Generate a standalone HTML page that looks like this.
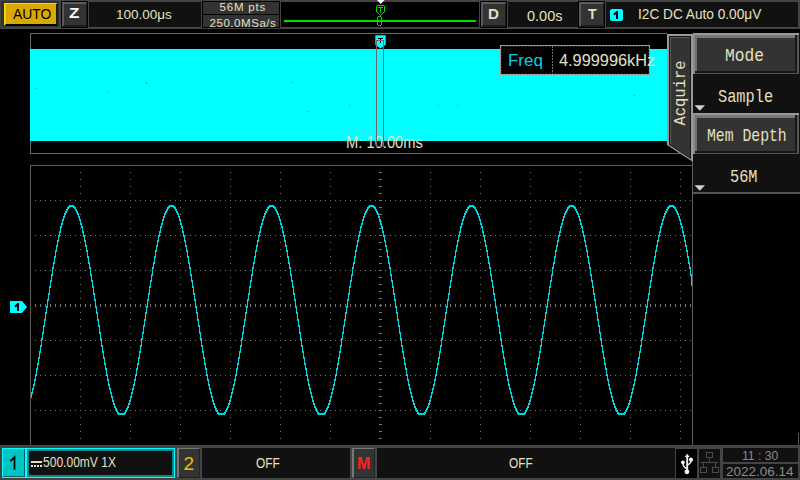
<!DOCTYPE html>
<html><head><meta charset="utf-8"><style>
html,body{margin:0;padding:0;background:#000;width:800px;height:480px;overflow:hidden;position:relative}
</style></head><body>
<svg width="800" height="480" viewBox="0 0 800 480" style="position:absolute;left:0;top:0" shape-rendering="crispEdges"><path fill="#767676" d="M35 200h1v1h-1zM40 200h1v1h-1zM45 200h1v1h-1zM50 200h1v1h-1zM55 200h1v1h-1zM60 200h1v1h-1zM65 200h1v1h-1zM70 200h1v1h-1zM75 200h1v1h-1zM80 200h1v1h-1zM85 200h1v1h-1zM90 200h1v1h-1zM95 200h1v1h-1zM100 200h1v1h-1zM105 200h1v1h-1zM110 200h1v1h-1zM115 200h1v1h-1zM120 200h1v1h-1zM125 200h1v1h-1zM130 200h1v1h-1zM135 200h1v1h-1zM140 200h1v1h-1zM145 200h1v1h-1zM150 200h1v1h-1zM155 200h1v1h-1zM160 200h1v1h-1zM165 200h1v1h-1zM170 200h1v1h-1zM175 200h1v1h-1zM180 200h1v1h-1zM185 200h1v1h-1zM190 200h1v1h-1zM195 200h1v1h-1zM200 200h1v1h-1zM205 200h1v1h-1zM210 200h1v1h-1zM215 200h1v1h-1zM220 200h1v1h-1zM225 200h1v1h-1zM230 200h1v1h-1zM235 200h1v1h-1zM240 200h1v1h-1zM245 200h1v1h-1zM250 200h1v1h-1zM255 200h1v1h-1zM260 200h1v1h-1zM265 200h1v1h-1zM270 200h1v1h-1zM275 200h1v1h-1zM280 200h1v1h-1zM285 200h1v1h-1zM290 200h1v1h-1zM295 200h1v1h-1zM300 200h1v1h-1zM305 200h1v1h-1zM310 200h1v1h-1zM315 200h1v1h-1zM320 200h1v1h-1zM325 200h1v1h-1zM330 200h1v1h-1zM335 200h1v1h-1zM340 200h1v1h-1zM345 200h1v1h-1zM350 200h1v1h-1zM355 200h1v1h-1zM360 200h1v1h-1zM365 200h1v1h-1zM370 200h1v1h-1zM375 200h1v1h-1zM380 200h1v1h-1zM385 200h1v1h-1zM390 200h1v1h-1zM395 200h1v1h-1zM400 200h1v1h-1zM405 200h1v1h-1zM410 200h1v1h-1zM415 200h1v1h-1zM420 200h1v1h-1zM425 200h1v1h-1zM430 200h1v1h-1zM435 200h1v1h-1zM440 200h1v1h-1zM445 200h1v1h-1zM450 200h1v1h-1zM455 200h1v1h-1zM460 200h1v1h-1zM465 200h1v1h-1zM470 200h1v1h-1zM475 200h1v1h-1zM480 200h1v1h-1zM485 200h1v1h-1zM490 200h1v1h-1zM495 200h1v1h-1zM500 200h1v1h-1zM505 200h1v1h-1zM510 200h1v1h-1zM515 200h1v1h-1zM520 200h1v1h-1zM525 200h1v1h-1zM530 200h1v1h-1zM535 200h1v1h-1zM540 200h1v1h-1zM545 200h1v1h-1zM550 200h1v1h-1zM555 200h1v1h-1zM560 200h1v1h-1zM565 200h1v1h-1zM570 200h1v1h-1zM575 200h1v1h-1zM580 200h1v1h-1zM585 200h1v1h-1zM590 200h1v1h-1zM595 200h1v1h-1zM600 200h1v1h-1zM605 200h1v1h-1zM610 200h1v1h-1zM615 200h1v1h-1zM620 200h1v1h-1zM625 200h1v1h-1zM630 200h1v1h-1zM635 200h1v1h-1zM640 200h1v1h-1zM645 200h1v1h-1zM650 200h1v1h-1zM655 200h1v1h-1zM660 200h1v1h-1zM665 200h1v1h-1zM670 200h1v1h-1zM675 200h1v1h-1zM680 200h1v1h-1zM685 200h1v1h-1zM690 200h1v1h-1zM35 235h1v1h-1zM40 235h1v1h-1zM45 235h1v1h-1zM50 235h1v1h-1zM55 235h1v1h-1zM60 235h1v1h-1zM65 235h1v1h-1zM70 235h1v1h-1zM75 235h1v1h-1zM80 235h1v1h-1zM85 235h1v1h-1zM90 235h1v1h-1zM95 235h1v1h-1zM100 235h1v1h-1zM105 235h1v1h-1zM110 235h1v1h-1zM115 235h1v1h-1zM120 235h1v1h-1zM125 235h1v1h-1zM130 235h1v1h-1zM135 235h1v1h-1zM140 235h1v1h-1zM145 235h1v1h-1zM150 235h1v1h-1zM155 235h1v1h-1zM160 235h1v1h-1zM165 235h1v1h-1zM170 235h1v1h-1zM175 235h1v1h-1zM180 235h1v1h-1zM185 235h1v1h-1zM190 235h1v1h-1zM195 235h1v1h-1zM200 235h1v1h-1zM205 235h1v1h-1zM210 235h1v1h-1zM215 235h1v1h-1zM220 235h1v1h-1zM225 235h1v1h-1zM230 235h1v1h-1zM235 235h1v1h-1zM240 235h1v1h-1zM245 235h1v1h-1zM250 235h1v1h-1zM255 235h1v1h-1zM260 235h1v1h-1zM265 235h1v1h-1zM270 235h1v1h-1zM275 235h1v1h-1zM280 235h1v1h-1zM285 235h1v1h-1zM290 235h1v1h-1zM295 235h1v1h-1zM300 235h1v1h-1zM305 235h1v1h-1zM310 235h1v1h-1zM315 235h1v1h-1zM320 235h1v1h-1zM325 235h1v1h-1zM330 235h1v1h-1zM335 235h1v1h-1zM340 235h1v1h-1zM345 235h1v1h-1zM350 235h1v1h-1zM355 235h1v1h-1zM360 235h1v1h-1zM365 235h1v1h-1zM370 235h1v1h-1zM375 235h1v1h-1zM380 235h1v1h-1zM385 235h1v1h-1zM390 235h1v1h-1zM395 235h1v1h-1zM400 235h1v1h-1zM405 235h1v1h-1zM410 235h1v1h-1zM415 235h1v1h-1zM420 235h1v1h-1zM425 235h1v1h-1zM430 235h1v1h-1zM435 235h1v1h-1zM440 235h1v1h-1zM445 235h1v1h-1zM450 235h1v1h-1zM455 235h1v1h-1zM460 235h1v1h-1zM465 235h1v1h-1zM470 235h1v1h-1zM475 235h1v1h-1zM480 235h1v1h-1zM485 235h1v1h-1zM490 235h1v1h-1zM495 235h1v1h-1zM500 235h1v1h-1zM505 235h1v1h-1zM510 235h1v1h-1zM515 235h1v1h-1zM520 235h1v1h-1zM525 235h1v1h-1zM530 235h1v1h-1zM535 235h1v1h-1zM540 235h1v1h-1zM545 235h1v1h-1zM550 235h1v1h-1zM555 235h1v1h-1zM560 235h1v1h-1zM565 235h1v1h-1zM570 235h1v1h-1zM575 235h1v1h-1zM580 235h1v1h-1zM585 235h1v1h-1zM590 235h1v1h-1zM595 235h1v1h-1zM600 235h1v1h-1zM605 235h1v1h-1zM610 235h1v1h-1zM615 235h1v1h-1zM620 235h1v1h-1zM625 235h1v1h-1zM630 235h1v1h-1zM635 235h1v1h-1zM640 235h1v1h-1zM645 235h1v1h-1zM650 235h1v1h-1zM655 235h1v1h-1zM660 235h1v1h-1zM665 235h1v1h-1zM670 235h1v1h-1zM675 235h1v1h-1zM680 235h1v1h-1zM685 235h1v1h-1zM690 235h1v1h-1zM35 270h1v1h-1zM40 270h1v1h-1zM45 270h1v1h-1zM50 270h1v1h-1zM55 270h1v1h-1zM60 270h1v1h-1zM65 270h1v1h-1zM70 270h1v1h-1zM75 270h1v1h-1zM80 270h1v1h-1zM85 270h1v1h-1zM90 270h1v1h-1zM95 270h1v1h-1zM100 270h1v1h-1zM105 270h1v1h-1zM110 270h1v1h-1zM115 270h1v1h-1zM120 270h1v1h-1zM125 270h1v1h-1zM130 270h1v1h-1zM135 270h1v1h-1zM140 270h1v1h-1zM145 270h1v1h-1zM150 270h1v1h-1zM155 270h1v1h-1zM160 270h1v1h-1zM165 270h1v1h-1zM170 270h1v1h-1zM175 270h1v1h-1zM180 270h1v1h-1zM185 270h1v1h-1zM190 270h1v1h-1zM195 270h1v1h-1zM200 270h1v1h-1zM205 270h1v1h-1zM210 270h1v1h-1zM215 270h1v1h-1zM220 270h1v1h-1zM225 270h1v1h-1zM230 270h1v1h-1zM235 270h1v1h-1zM240 270h1v1h-1zM245 270h1v1h-1zM250 270h1v1h-1zM255 270h1v1h-1zM260 270h1v1h-1zM265 270h1v1h-1zM270 270h1v1h-1zM275 270h1v1h-1zM280 270h1v1h-1zM285 270h1v1h-1zM290 270h1v1h-1zM295 270h1v1h-1zM300 270h1v1h-1zM305 270h1v1h-1zM310 270h1v1h-1zM315 270h1v1h-1zM320 270h1v1h-1zM325 270h1v1h-1zM330 270h1v1h-1zM335 270h1v1h-1zM340 270h1v1h-1zM345 270h1v1h-1zM350 270h1v1h-1zM355 270h1v1h-1zM360 270h1v1h-1zM365 270h1v1h-1zM370 270h1v1h-1zM375 270h1v1h-1zM380 270h1v1h-1zM385 270h1v1h-1zM390 270h1v1h-1zM395 270h1v1h-1zM400 270h1v1h-1zM405 270h1v1h-1zM410 270h1v1h-1zM415 270h1v1h-1zM420 270h1v1h-1zM425 270h1v1h-1zM430 270h1v1h-1zM435 270h1v1h-1zM440 270h1v1h-1zM445 270h1v1h-1zM450 270h1v1h-1zM455 270h1v1h-1zM460 270h1v1h-1zM465 270h1v1h-1zM470 270h1v1h-1zM475 270h1v1h-1zM480 270h1v1h-1zM485 270h1v1h-1zM490 270h1v1h-1zM495 270h1v1h-1zM500 270h1v1h-1zM505 270h1v1h-1zM510 270h1v1h-1zM515 270h1v1h-1zM520 270h1v1h-1zM525 270h1v1h-1zM530 270h1v1h-1zM535 270h1v1h-1zM540 270h1v1h-1zM545 270h1v1h-1zM550 270h1v1h-1zM555 270h1v1h-1zM560 270h1v1h-1zM565 270h1v1h-1zM570 270h1v1h-1zM575 270h1v1h-1zM580 270h1v1h-1zM585 270h1v1h-1zM590 270h1v1h-1zM595 270h1v1h-1zM600 270h1v1h-1zM605 270h1v1h-1zM610 270h1v1h-1zM615 270h1v1h-1zM620 270h1v1h-1zM625 270h1v1h-1zM630 270h1v1h-1zM635 270h1v1h-1zM640 270h1v1h-1zM645 270h1v1h-1zM650 270h1v1h-1zM655 270h1v1h-1zM660 270h1v1h-1zM665 270h1v1h-1zM670 270h1v1h-1zM675 270h1v1h-1zM680 270h1v1h-1zM685 270h1v1h-1zM690 270h1v1h-1zM35 340h1v1h-1zM40 340h1v1h-1zM45 340h1v1h-1zM50 340h1v1h-1zM55 340h1v1h-1zM60 340h1v1h-1zM65 340h1v1h-1zM70 340h1v1h-1zM75 340h1v1h-1zM80 340h1v1h-1zM85 340h1v1h-1zM90 340h1v1h-1zM95 340h1v1h-1zM100 340h1v1h-1zM105 340h1v1h-1zM110 340h1v1h-1zM115 340h1v1h-1zM120 340h1v1h-1zM125 340h1v1h-1zM130 340h1v1h-1zM135 340h1v1h-1zM140 340h1v1h-1zM145 340h1v1h-1zM150 340h1v1h-1zM155 340h1v1h-1zM160 340h1v1h-1zM165 340h1v1h-1zM170 340h1v1h-1zM175 340h1v1h-1zM180 340h1v1h-1zM185 340h1v1h-1zM190 340h1v1h-1zM195 340h1v1h-1zM200 340h1v1h-1zM205 340h1v1h-1zM210 340h1v1h-1zM215 340h1v1h-1zM220 340h1v1h-1zM225 340h1v1h-1zM230 340h1v1h-1zM235 340h1v1h-1zM240 340h1v1h-1zM245 340h1v1h-1zM250 340h1v1h-1zM255 340h1v1h-1zM260 340h1v1h-1zM265 340h1v1h-1zM270 340h1v1h-1zM275 340h1v1h-1zM280 340h1v1h-1zM285 340h1v1h-1zM290 340h1v1h-1zM295 340h1v1h-1zM300 340h1v1h-1zM305 340h1v1h-1zM310 340h1v1h-1zM315 340h1v1h-1zM320 340h1v1h-1zM325 340h1v1h-1zM330 340h1v1h-1zM335 340h1v1h-1zM340 340h1v1h-1zM345 340h1v1h-1zM350 340h1v1h-1zM355 340h1v1h-1zM360 340h1v1h-1zM365 340h1v1h-1zM370 340h1v1h-1zM375 340h1v1h-1zM380 340h1v1h-1zM385 340h1v1h-1zM390 340h1v1h-1zM395 340h1v1h-1zM400 340h1v1h-1zM405 340h1v1h-1zM410 340h1v1h-1zM415 340h1v1h-1zM420 340h1v1h-1zM425 340h1v1h-1zM430 340h1v1h-1zM435 340h1v1h-1zM440 340h1v1h-1zM445 340h1v1h-1zM450 340h1v1h-1zM455 340h1v1h-1zM460 340h1v1h-1zM465 340h1v1h-1zM470 340h1v1h-1zM475 340h1v1h-1zM480 340h1v1h-1zM485 340h1v1h-1zM490 340h1v1h-1zM495 340h1v1h-1zM500 340h1v1h-1zM505 340h1v1h-1zM510 340h1v1h-1zM515 340h1v1h-1zM520 340h1v1h-1zM525 340h1v1h-1zM530 340h1v1h-1zM535 340h1v1h-1zM540 340h1v1h-1zM545 340h1v1h-1zM550 340h1v1h-1zM555 340h1v1h-1zM560 340h1v1h-1zM565 340h1v1h-1zM570 340h1v1h-1zM575 340h1v1h-1zM580 340h1v1h-1zM585 340h1v1h-1zM590 340h1v1h-1zM595 340h1v1h-1zM600 340h1v1h-1zM605 340h1v1h-1zM610 340h1v1h-1zM615 340h1v1h-1zM620 340h1v1h-1zM625 340h1v1h-1zM630 340h1v1h-1zM635 340h1v1h-1zM640 340h1v1h-1zM645 340h1v1h-1zM650 340h1v1h-1zM655 340h1v1h-1zM660 340h1v1h-1zM665 340h1v1h-1zM670 340h1v1h-1zM675 340h1v1h-1zM680 340h1v1h-1zM685 340h1v1h-1zM690 340h1v1h-1zM35 375h1v1h-1zM40 375h1v1h-1zM45 375h1v1h-1zM50 375h1v1h-1zM55 375h1v1h-1zM60 375h1v1h-1zM65 375h1v1h-1zM70 375h1v1h-1zM75 375h1v1h-1zM80 375h1v1h-1zM85 375h1v1h-1zM90 375h1v1h-1zM95 375h1v1h-1zM100 375h1v1h-1zM105 375h1v1h-1zM110 375h1v1h-1zM115 375h1v1h-1zM120 375h1v1h-1zM125 375h1v1h-1zM130 375h1v1h-1zM135 375h1v1h-1zM140 375h1v1h-1zM145 375h1v1h-1zM150 375h1v1h-1zM155 375h1v1h-1zM160 375h1v1h-1zM165 375h1v1h-1zM170 375h1v1h-1zM175 375h1v1h-1zM180 375h1v1h-1zM185 375h1v1h-1zM190 375h1v1h-1zM195 375h1v1h-1zM200 375h1v1h-1zM205 375h1v1h-1zM210 375h1v1h-1zM215 375h1v1h-1zM220 375h1v1h-1zM225 375h1v1h-1zM230 375h1v1h-1zM235 375h1v1h-1zM240 375h1v1h-1zM245 375h1v1h-1zM250 375h1v1h-1zM255 375h1v1h-1zM260 375h1v1h-1zM265 375h1v1h-1zM270 375h1v1h-1zM275 375h1v1h-1zM280 375h1v1h-1zM285 375h1v1h-1zM290 375h1v1h-1zM295 375h1v1h-1zM300 375h1v1h-1zM305 375h1v1h-1zM310 375h1v1h-1zM315 375h1v1h-1zM320 375h1v1h-1zM325 375h1v1h-1zM330 375h1v1h-1zM335 375h1v1h-1zM340 375h1v1h-1zM345 375h1v1h-1zM350 375h1v1h-1zM355 375h1v1h-1zM360 375h1v1h-1zM365 375h1v1h-1zM370 375h1v1h-1zM375 375h1v1h-1zM380 375h1v1h-1zM385 375h1v1h-1zM390 375h1v1h-1zM395 375h1v1h-1zM400 375h1v1h-1zM405 375h1v1h-1zM410 375h1v1h-1zM415 375h1v1h-1zM420 375h1v1h-1zM425 375h1v1h-1zM430 375h1v1h-1zM435 375h1v1h-1zM440 375h1v1h-1zM445 375h1v1h-1zM450 375h1v1h-1zM455 375h1v1h-1zM460 375h1v1h-1zM465 375h1v1h-1zM470 375h1v1h-1zM475 375h1v1h-1zM480 375h1v1h-1zM485 375h1v1h-1zM490 375h1v1h-1zM495 375h1v1h-1zM500 375h1v1h-1zM505 375h1v1h-1zM510 375h1v1h-1zM515 375h1v1h-1zM520 375h1v1h-1zM525 375h1v1h-1zM530 375h1v1h-1zM535 375h1v1h-1zM540 375h1v1h-1zM545 375h1v1h-1zM550 375h1v1h-1zM555 375h1v1h-1zM560 375h1v1h-1zM565 375h1v1h-1zM570 375h1v1h-1zM575 375h1v1h-1zM580 375h1v1h-1zM585 375h1v1h-1zM590 375h1v1h-1zM595 375h1v1h-1zM600 375h1v1h-1zM605 375h1v1h-1zM610 375h1v1h-1zM615 375h1v1h-1zM620 375h1v1h-1zM625 375h1v1h-1zM630 375h1v1h-1zM635 375h1v1h-1zM640 375h1v1h-1zM645 375h1v1h-1zM650 375h1v1h-1zM655 375h1v1h-1zM660 375h1v1h-1zM665 375h1v1h-1zM670 375h1v1h-1zM675 375h1v1h-1zM680 375h1v1h-1zM685 375h1v1h-1zM690 375h1v1h-1zM35 410h1v1h-1zM40 410h1v1h-1zM45 410h1v1h-1zM50 410h1v1h-1zM55 410h1v1h-1zM60 410h1v1h-1zM65 410h1v1h-1zM70 410h1v1h-1zM75 410h1v1h-1zM80 410h1v1h-1zM85 410h1v1h-1zM90 410h1v1h-1zM95 410h1v1h-1zM100 410h1v1h-1zM105 410h1v1h-1zM110 410h1v1h-1zM115 410h1v1h-1zM120 410h1v1h-1zM125 410h1v1h-1zM130 410h1v1h-1zM135 410h1v1h-1zM140 410h1v1h-1zM145 410h1v1h-1zM150 410h1v1h-1zM155 410h1v1h-1zM160 410h1v1h-1zM165 410h1v1h-1zM170 410h1v1h-1zM175 410h1v1h-1zM180 410h1v1h-1zM185 410h1v1h-1zM190 410h1v1h-1zM195 410h1v1h-1zM200 410h1v1h-1zM205 410h1v1h-1zM210 410h1v1h-1zM215 410h1v1h-1zM220 410h1v1h-1zM225 410h1v1h-1zM230 410h1v1h-1zM235 410h1v1h-1zM240 410h1v1h-1zM245 410h1v1h-1zM250 410h1v1h-1zM255 410h1v1h-1zM260 410h1v1h-1zM265 410h1v1h-1zM270 410h1v1h-1zM275 410h1v1h-1zM280 410h1v1h-1zM285 410h1v1h-1zM290 410h1v1h-1zM295 410h1v1h-1zM300 410h1v1h-1zM305 410h1v1h-1zM310 410h1v1h-1zM315 410h1v1h-1zM320 410h1v1h-1zM325 410h1v1h-1zM330 410h1v1h-1zM335 410h1v1h-1zM340 410h1v1h-1zM345 410h1v1h-1zM350 410h1v1h-1zM355 410h1v1h-1zM360 410h1v1h-1zM365 410h1v1h-1zM370 410h1v1h-1zM375 410h1v1h-1zM380 410h1v1h-1zM385 410h1v1h-1zM390 410h1v1h-1zM395 410h1v1h-1zM400 410h1v1h-1zM405 410h1v1h-1zM410 410h1v1h-1zM415 410h1v1h-1zM420 410h1v1h-1zM425 410h1v1h-1zM430 410h1v1h-1zM435 410h1v1h-1zM440 410h1v1h-1zM445 410h1v1h-1zM450 410h1v1h-1zM455 410h1v1h-1zM460 410h1v1h-1zM465 410h1v1h-1zM470 410h1v1h-1zM475 410h1v1h-1zM480 410h1v1h-1zM485 410h1v1h-1zM490 410h1v1h-1zM495 410h1v1h-1zM500 410h1v1h-1zM505 410h1v1h-1zM510 410h1v1h-1zM515 410h1v1h-1zM520 410h1v1h-1zM525 410h1v1h-1zM530 410h1v1h-1zM535 410h1v1h-1zM540 410h1v1h-1zM545 410h1v1h-1zM550 410h1v1h-1zM555 410h1v1h-1zM560 410h1v1h-1zM565 410h1v1h-1zM570 410h1v1h-1zM575 410h1v1h-1zM580 410h1v1h-1zM585 410h1v1h-1zM590 410h1v1h-1zM595 410h1v1h-1zM600 410h1v1h-1zM605 410h1v1h-1zM610 410h1v1h-1zM615 410h1v1h-1zM620 410h1v1h-1zM625 410h1v1h-1zM630 410h1v1h-1zM635 410h1v1h-1zM640 410h1v1h-1zM645 410h1v1h-1zM650 410h1v1h-1zM655 410h1v1h-1zM660 410h1v1h-1zM665 410h1v1h-1zM670 410h1v1h-1zM675 410h1v1h-1zM680 410h1v1h-1zM685 410h1v1h-1zM690 410h1v1h-1zM80 172h1v1h-1zM80 179h1v1h-1zM80 186h1v1h-1zM80 193h1v1h-1zM80 200h1v1h-1zM80 207h1v1h-1zM80 214h1v1h-1zM80 221h1v1h-1zM80 228h1v1h-1zM80 235h1v1h-1zM80 242h1v1h-1zM80 249h1v1h-1zM80 256h1v1h-1zM80 263h1v1h-1zM80 270h1v1h-1zM80 277h1v1h-1zM80 284h1v1h-1zM80 291h1v1h-1zM80 298h1v1h-1zM80 305h1v1h-1zM80 312h1v1h-1zM80 319h1v1h-1zM80 326h1v1h-1zM80 333h1v1h-1zM80 340h1v1h-1zM80 347h1v1h-1zM80 354h1v1h-1zM80 361h1v1h-1zM80 368h1v1h-1zM80 375h1v1h-1zM80 382h1v1h-1zM80 389h1v1h-1zM80 396h1v1h-1zM80 403h1v1h-1zM80 410h1v1h-1zM80 417h1v1h-1zM80 424h1v1h-1zM80 431h1v1h-1zM80 438h1v1h-1zM130 172h1v1h-1zM130 179h1v1h-1zM130 186h1v1h-1zM130 193h1v1h-1zM130 200h1v1h-1zM130 207h1v1h-1zM130 214h1v1h-1zM130 221h1v1h-1zM130 228h1v1h-1zM130 235h1v1h-1zM130 242h1v1h-1zM130 249h1v1h-1zM130 256h1v1h-1zM130 263h1v1h-1zM130 270h1v1h-1zM130 277h1v1h-1zM130 284h1v1h-1zM130 291h1v1h-1zM130 298h1v1h-1zM130 305h1v1h-1zM130 312h1v1h-1zM130 319h1v1h-1zM130 326h1v1h-1zM130 333h1v1h-1zM130 340h1v1h-1zM130 347h1v1h-1zM130 354h1v1h-1zM130 361h1v1h-1zM130 368h1v1h-1zM130 375h1v1h-1zM130 382h1v1h-1zM130 389h1v1h-1zM130 396h1v1h-1zM130 403h1v1h-1zM130 410h1v1h-1zM130 417h1v1h-1zM130 424h1v1h-1zM130 431h1v1h-1zM130 438h1v1h-1zM180 172h1v1h-1zM180 179h1v1h-1zM180 186h1v1h-1zM180 193h1v1h-1zM180 200h1v1h-1zM180 207h1v1h-1zM180 214h1v1h-1zM180 221h1v1h-1zM180 228h1v1h-1zM180 235h1v1h-1zM180 242h1v1h-1zM180 249h1v1h-1zM180 256h1v1h-1zM180 263h1v1h-1zM180 270h1v1h-1zM180 277h1v1h-1zM180 284h1v1h-1zM180 291h1v1h-1zM180 298h1v1h-1zM180 305h1v1h-1zM180 312h1v1h-1zM180 319h1v1h-1zM180 326h1v1h-1zM180 333h1v1h-1zM180 340h1v1h-1zM180 347h1v1h-1zM180 354h1v1h-1zM180 361h1v1h-1zM180 368h1v1h-1zM180 375h1v1h-1zM180 382h1v1h-1zM180 389h1v1h-1zM180 396h1v1h-1zM180 403h1v1h-1zM180 410h1v1h-1zM180 417h1v1h-1zM180 424h1v1h-1zM180 431h1v1h-1zM180 438h1v1h-1zM230 172h1v1h-1zM230 179h1v1h-1zM230 186h1v1h-1zM230 193h1v1h-1zM230 200h1v1h-1zM230 207h1v1h-1zM230 214h1v1h-1zM230 221h1v1h-1zM230 228h1v1h-1zM230 235h1v1h-1zM230 242h1v1h-1zM230 249h1v1h-1zM230 256h1v1h-1zM230 263h1v1h-1zM230 270h1v1h-1zM230 277h1v1h-1zM230 284h1v1h-1zM230 291h1v1h-1zM230 298h1v1h-1zM230 305h1v1h-1zM230 312h1v1h-1zM230 319h1v1h-1zM230 326h1v1h-1zM230 333h1v1h-1zM230 340h1v1h-1zM230 347h1v1h-1zM230 354h1v1h-1zM230 361h1v1h-1zM230 368h1v1h-1zM230 375h1v1h-1zM230 382h1v1h-1zM230 389h1v1h-1zM230 396h1v1h-1zM230 403h1v1h-1zM230 410h1v1h-1zM230 417h1v1h-1zM230 424h1v1h-1zM230 431h1v1h-1zM230 438h1v1h-1zM280 172h1v1h-1zM280 179h1v1h-1zM280 186h1v1h-1zM280 193h1v1h-1zM280 200h1v1h-1zM280 207h1v1h-1zM280 214h1v1h-1zM280 221h1v1h-1zM280 228h1v1h-1zM280 235h1v1h-1zM280 242h1v1h-1zM280 249h1v1h-1zM280 256h1v1h-1zM280 263h1v1h-1zM280 270h1v1h-1zM280 277h1v1h-1zM280 284h1v1h-1zM280 291h1v1h-1zM280 298h1v1h-1zM280 305h1v1h-1zM280 312h1v1h-1zM280 319h1v1h-1zM280 326h1v1h-1zM280 333h1v1h-1zM280 340h1v1h-1zM280 347h1v1h-1zM280 354h1v1h-1zM280 361h1v1h-1zM280 368h1v1h-1zM280 375h1v1h-1zM280 382h1v1h-1zM280 389h1v1h-1zM280 396h1v1h-1zM280 403h1v1h-1zM280 410h1v1h-1zM280 417h1v1h-1zM280 424h1v1h-1zM280 431h1v1h-1zM280 438h1v1h-1zM330 172h1v1h-1zM330 179h1v1h-1zM330 186h1v1h-1zM330 193h1v1h-1zM330 200h1v1h-1zM330 207h1v1h-1zM330 214h1v1h-1zM330 221h1v1h-1zM330 228h1v1h-1zM330 235h1v1h-1zM330 242h1v1h-1zM330 249h1v1h-1zM330 256h1v1h-1zM330 263h1v1h-1zM330 270h1v1h-1zM330 277h1v1h-1zM330 284h1v1h-1zM330 291h1v1h-1zM330 298h1v1h-1zM330 305h1v1h-1zM330 312h1v1h-1zM330 319h1v1h-1zM330 326h1v1h-1zM330 333h1v1h-1zM330 340h1v1h-1zM330 347h1v1h-1zM330 354h1v1h-1zM330 361h1v1h-1zM330 368h1v1h-1zM330 375h1v1h-1zM330 382h1v1h-1zM330 389h1v1h-1zM330 396h1v1h-1zM330 403h1v1h-1zM330 410h1v1h-1zM330 417h1v1h-1zM330 424h1v1h-1zM330 431h1v1h-1zM330 438h1v1h-1zM430 172h1v1h-1zM430 179h1v1h-1zM430 186h1v1h-1zM430 193h1v1h-1zM430 200h1v1h-1zM430 207h1v1h-1zM430 214h1v1h-1zM430 221h1v1h-1zM430 228h1v1h-1zM430 235h1v1h-1zM430 242h1v1h-1zM430 249h1v1h-1zM430 256h1v1h-1zM430 263h1v1h-1zM430 270h1v1h-1zM430 277h1v1h-1zM430 284h1v1h-1zM430 291h1v1h-1zM430 298h1v1h-1zM430 305h1v1h-1zM430 312h1v1h-1zM430 319h1v1h-1zM430 326h1v1h-1zM430 333h1v1h-1zM430 340h1v1h-1zM430 347h1v1h-1zM430 354h1v1h-1zM430 361h1v1h-1zM430 368h1v1h-1zM430 375h1v1h-1zM430 382h1v1h-1zM430 389h1v1h-1zM430 396h1v1h-1zM430 403h1v1h-1zM430 410h1v1h-1zM430 417h1v1h-1zM430 424h1v1h-1zM430 431h1v1h-1zM430 438h1v1h-1zM480 172h1v1h-1zM480 179h1v1h-1zM480 186h1v1h-1zM480 193h1v1h-1zM480 200h1v1h-1zM480 207h1v1h-1zM480 214h1v1h-1zM480 221h1v1h-1zM480 228h1v1h-1zM480 235h1v1h-1zM480 242h1v1h-1zM480 249h1v1h-1zM480 256h1v1h-1zM480 263h1v1h-1zM480 270h1v1h-1zM480 277h1v1h-1zM480 284h1v1h-1zM480 291h1v1h-1zM480 298h1v1h-1zM480 305h1v1h-1zM480 312h1v1h-1zM480 319h1v1h-1zM480 326h1v1h-1zM480 333h1v1h-1zM480 340h1v1h-1zM480 347h1v1h-1zM480 354h1v1h-1zM480 361h1v1h-1zM480 368h1v1h-1zM480 375h1v1h-1zM480 382h1v1h-1zM480 389h1v1h-1zM480 396h1v1h-1zM480 403h1v1h-1zM480 410h1v1h-1zM480 417h1v1h-1zM480 424h1v1h-1zM480 431h1v1h-1zM480 438h1v1h-1zM530 172h1v1h-1zM530 179h1v1h-1zM530 186h1v1h-1zM530 193h1v1h-1zM530 200h1v1h-1zM530 207h1v1h-1zM530 214h1v1h-1zM530 221h1v1h-1zM530 228h1v1h-1zM530 235h1v1h-1zM530 242h1v1h-1zM530 249h1v1h-1zM530 256h1v1h-1zM530 263h1v1h-1zM530 270h1v1h-1zM530 277h1v1h-1zM530 284h1v1h-1zM530 291h1v1h-1zM530 298h1v1h-1zM530 305h1v1h-1zM530 312h1v1h-1zM530 319h1v1h-1zM530 326h1v1h-1zM530 333h1v1h-1zM530 340h1v1h-1zM530 347h1v1h-1zM530 354h1v1h-1zM530 361h1v1h-1zM530 368h1v1h-1zM530 375h1v1h-1zM530 382h1v1h-1zM530 389h1v1h-1zM530 396h1v1h-1zM530 403h1v1h-1zM530 410h1v1h-1zM530 417h1v1h-1zM530 424h1v1h-1zM530 431h1v1h-1zM530 438h1v1h-1zM580 172h1v1h-1zM580 179h1v1h-1zM580 186h1v1h-1zM580 193h1v1h-1zM580 200h1v1h-1zM580 207h1v1h-1zM580 214h1v1h-1zM580 221h1v1h-1zM580 228h1v1h-1zM580 235h1v1h-1zM580 242h1v1h-1zM580 249h1v1h-1zM580 256h1v1h-1zM580 263h1v1h-1zM580 270h1v1h-1zM580 277h1v1h-1zM580 284h1v1h-1zM580 291h1v1h-1zM580 298h1v1h-1zM580 305h1v1h-1zM580 312h1v1h-1zM580 319h1v1h-1zM580 326h1v1h-1zM580 333h1v1h-1zM580 340h1v1h-1zM580 347h1v1h-1zM580 354h1v1h-1zM580 361h1v1h-1zM580 368h1v1h-1zM580 375h1v1h-1zM580 382h1v1h-1zM580 389h1v1h-1zM580 396h1v1h-1zM580 403h1v1h-1zM580 410h1v1h-1zM580 417h1v1h-1zM580 424h1v1h-1zM580 431h1v1h-1zM580 438h1v1h-1zM630 172h1v1h-1zM630 179h1v1h-1zM630 186h1v1h-1zM630 193h1v1h-1zM630 200h1v1h-1zM630 207h1v1h-1zM630 214h1v1h-1zM630 221h1v1h-1zM630 228h1v1h-1zM630 235h1v1h-1zM630 242h1v1h-1zM630 249h1v1h-1zM630 256h1v1h-1zM630 263h1v1h-1zM630 270h1v1h-1zM630 277h1v1h-1zM630 284h1v1h-1zM630 291h1v1h-1zM630 298h1v1h-1zM630 305h1v1h-1zM630 312h1v1h-1zM630 319h1v1h-1zM630 326h1v1h-1zM630 333h1v1h-1zM630 340h1v1h-1zM630 347h1v1h-1zM630 354h1v1h-1zM630 361h1v1h-1zM630 368h1v1h-1zM630 375h1v1h-1zM630 382h1v1h-1zM630 389h1v1h-1zM630 396h1v1h-1zM630 403h1v1h-1zM630 410h1v1h-1zM630 417h1v1h-1zM630 424h1v1h-1zM630 431h1v1h-1zM630 438h1v1h-1zM680 172h1v1h-1zM680 179h1v1h-1zM680 186h1v1h-1zM680 193h1v1h-1zM680 200h1v1h-1zM680 207h1v1h-1zM680 214h1v1h-1zM680 221h1v1h-1zM680 228h1v1h-1zM680 235h1v1h-1zM680 242h1v1h-1zM680 249h1v1h-1zM680 256h1v1h-1zM680 263h1v1h-1zM680 270h1v1h-1zM680 277h1v1h-1zM680 284h1v1h-1zM680 291h1v1h-1zM680 298h1v1h-1zM680 305h1v1h-1zM680 312h1v1h-1zM680 319h1v1h-1zM680 326h1v1h-1zM680 333h1v1h-1zM680 340h1v1h-1zM680 347h1v1h-1zM680 354h1v1h-1zM680 361h1v1h-1zM680 368h1v1h-1zM680 375h1v1h-1zM680 382h1v1h-1zM680 389h1v1h-1zM680 396h1v1h-1zM680 403h1v1h-1zM680 410h1v1h-1zM680 417h1v1h-1zM680 424h1v1h-1zM680 431h1v1h-1zM680 438h1v1h-1zM35 304h1v3h-1zM40 304h1v3h-1zM45 304h1v3h-1zM50 304h1v3h-1zM55 304h1v3h-1zM60 304h1v3h-1zM65 304h1v3h-1zM70 304h1v3h-1zM75 304h1v3h-1zM80 304h1v3h-1zM85 304h1v3h-1zM90 304h1v3h-1zM95 304h1v3h-1zM100 304h1v3h-1zM105 304h1v3h-1zM110 304h1v3h-1zM115 304h1v3h-1zM120 304h1v3h-1zM125 304h1v3h-1zM130 304h1v3h-1zM135 304h1v3h-1zM140 304h1v3h-1zM145 304h1v3h-1zM150 304h1v3h-1zM155 304h1v3h-1zM160 304h1v3h-1zM165 304h1v3h-1zM170 304h1v3h-1zM175 304h1v3h-1zM180 304h1v3h-1zM185 304h1v3h-1zM190 304h1v3h-1zM195 304h1v3h-1zM200 304h1v3h-1zM205 304h1v3h-1zM210 304h1v3h-1zM215 304h1v3h-1zM220 304h1v3h-1zM225 304h1v3h-1zM230 304h1v3h-1zM235 304h1v3h-1zM240 304h1v3h-1zM245 304h1v3h-1zM250 304h1v3h-1zM255 304h1v3h-1zM260 304h1v3h-1zM265 304h1v3h-1zM270 304h1v3h-1zM275 304h1v3h-1zM280 304h1v3h-1zM285 304h1v3h-1zM290 304h1v3h-1zM295 304h1v3h-1zM300 304h1v3h-1zM305 304h1v3h-1zM310 304h1v3h-1zM315 304h1v3h-1zM320 304h1v3h-1zM325 304h1v3h-1zM330 304h1v3h-1zM335 304h1v3h-1zM340 304h1v3h-1zM345 304h1v3h-1zM350 304h1v3h-1zM355 304h1v3h-1zM360 304h1v3h-1zM365 304h1v3h-1zM370 304h1v3h-1zM375 304h1v3h-1zM380 304h1v3h-1zM385 304h1v3h-1zM390 304h1v3h-1zM395 304h1v3h-1zM400 304h1v3h-1zM405 304h1v3h-1zM410 304h1v3h-1zM415 304h1v3h-1zM420 304h1v3h-1zM425 304h1v3h-1zM430 304h1v3h-1zM435 304h1v3h-1zM440 304h1v3h-1zM445 304h1v3h-1zM450 304h1v3h-1zM455 304h1v3h-1zM460 304h1v3h-1zM465 304h1v3h-1zM470 304h1v3h-1zM475 304h1v3h-1zM480 304h1v3h-1zM485 304h1v3h-1zM490 304h1v3h-1zM495 304h1v3h-1zM500 304h1v3h-1zM505 304h1v3h-1zM510 304h1v3h-1zM515 304h1v3h-1zM520 304h1v3h-1zM525 304h1v3h-1zM530 304h1v3h-1zM535 304h1v3h-1zM540 304h1v3h-1zM545 304h1v3h-1zM550 304h1v3h-1zM555 304h1v3h-1zM560 304h1v3h-1zM565 304h1v3h-1zM570 304h1v3h-1zM575 304h1v3h-1zM580 304h1v3h-1zM585 304h1v3h-1zM590 304h1v3h-1zM595 304h1v3h-1zM600 304h1v3h-1zM605 304h1v3h-1zM610 304h1v3h-1zM615 304h1v3h-1zM620 304h1v3h-1zM625 304h1v3h-1zM630 304h1v3h-1zM635 304h1v3h-1zM640 304h1v3h-1zM645 304h1v3h-1zM650 304h1v3h-1zM655 304h1v3h-1zM660 304h1v3h-1zM665 304h1v3h-1zM670 304h1v3h-1zM675 304h1v3h-1zM680 304h1v3h-1zM685 304h1v3h-1zM690 304h1v3h-1zM379 172h3v1h-3zM379 179h3v1h-3zM379 186h3v1h-3zM379 193h3v1h-3zM379 200h3v1h-3zM379 207h3v1h-3zM379 214h3v1h-3zM379 221h3v1h-3zM379 228h3v1h-3zM379 235h3v1h-3zM379 242h3v1h-3zM379 249h3v1h-3zM379 256h3v1h-3zM379 263h3v1h-3zM379 270h3v1h-3zM379 277h3v1h-3zM379 284h3v1h-3zM379 291h3v1h-3zM379 298h3v1h-3zM379 305h3v1h-3zM379 312h3v1h-3zM379 319h3v1h-3zM379 326h3v1h-3zM379 333h3v1h-3zM379 340h3v1h-3zM379 347h3v1h-3zM379 354h3v1h-3zM379 361h3v1h-3zM379 368h3v1h-3zM379 375h3v1h-3zM379 382h3v1h-3zM379 389h3v1h-3zM379 396h3v1h-3zM379 403h3v1h-3zM379 410h3v1h-3zM379 417h3v1h-3zM379 424h3v1h-3zM379 431h3v1h-3zM379 438h3v1h-3z"/><path fill="#686868" d="M30 33h637v1h-637zM30 33h1v120h-1zM30 153h650v1h-650z"/><rect x="30" y="49" width="640" height="92" fill="#00ffff"/><path fill="#109898" d="M36 88h1v1h-1zM108 92h1v1h-1zM146 82h1v2h-1zM292 82h1v1h-1zM308 111h1v1h-1zM349 105h1v1h-1zM438 105h1v1h-1zM457 105h1v1h-1zM634 95h1v1h-1z"/><path fill="#00d8e0" d="M30 396h1v6h-1zM31 392h1v6h-1zM32 388h1v6h-1zM33 384h1v6h-1zM34 379h1v7h-1zM35 374h1v7h-1zM36 368h1v8h-1zM37 363h1v7h-1zM38 357h1v8h-1zM39 351h1v8h-1zM40 345h1v8h-1zM41 338h1v9h-1zM42 332h1v8h-1zM43 325h1v9h-1zM44 319h1v8h-1zM45 312h1v9h-1zM46 306h1v8h-1zM47 299h1v9h-1zM48 293h1v8h-1zM49 286h1v9h-1zM50 280h1v8h-1zM51 274h1v8h-1zM52 267h1v9h-1zM53 262h1v7h-1zM54 256h1v8h-1zM55 250h1v8h-1zM56 245h1v7h-1zM57 240h1v7h-1zM58 235h1v7h-1zM59 231h1v6h-1zM60 226h1v7h-1zM61 223h1v5h-1zM62 219h1v6h-1zM63 216h1v5h-1zM64 213h1v5h-1zM65 211h1v4h-1zM66 209h1v4h-1zM67 207h1v4h-1zM68 206h1v3h-1zM69 205h1v3h-1zM70 205h1v2h-1zM71 205h1v2h-1zM72 205h1v2h-1zM73 205h1v3h-1zM74 206h1v3h-1zM75 207h1v4h-1zM76 209h1v4h-1zM77 211h1v4h-1zM78 213h1v5h-1zM79 216h1v5h-1zM80 219h1v6h-1zM81 223h1v5h-1zM82 226h1v7h-1zM83 231h1v6h-1zM84 235h1v7h-1zM85 240h1v7h-1zM86 245h1v7h-1zM87 250h1v8h-1zM88 256h1v8h-1zM89 262h1v7h-1zM90 267h1v9h-1zM91 274h1v8h-1zM92 280h1v8h-1zM93 286h1v9h-1zM94 293h1v8h-1zM95 299h1v9h-1zM96 306h1v8h-1zM97 312h1v9h-1zM98 319h1v8h-1zM99 325h1v9h-1zM100 332h1v8h-1zM101 338h1v9h-1zM102 345h1v8h-1zM103 351h1v8h-1zM104 357h1v8h-1zM105 363h1v7h-1zM106 368h1v8h-1zM107 374h1v7h-1zM108 379h1v7h-1zM109 384h1v6h-1zM110 388h1v6h-1zM111 392h1v6h-1zM112 396h1v6h-1zM113 400h1v5h-1zM114 403h1v5h-1zM115 406h1v4h-1zM116 408h1v4h-1zM117 410h1v4h-1zM118 412h1v3h-1zM119 413h1v2h-1zM120 413h1v2h-1zM121 413h1v2h-1zM122 413h1v2h-1zM123 413h1v2h-1zM124 412h1v3h-1zM125 410h1v4h-1zM126 408h1v4h-1zM127 406h1v4h-1zM128 403h1v5h-1zM129 400h1v5h-1zM130 396h1v6h-1zM131 392h1v6h-1zM132 388h1v6h-1zM133 384h1v6h-1zM134 379h1v7h-1zM135 374h1v7h-1zM136 368h1v8h-1zM137 363h1v7h-1zM138 357h1v8h-1zM139 351h1v8h-1zM140 345h1v8h-1zM141 338h1v9h-1zM142 332h1v8h-1zM143 325h1v9h-1zM144 319h1v8h-1zM145 312h1v9h-1zM146 306h1v8h-1zM147 299h1v9h-1zM148 293h1v8h-1zM149 286h1v9h-1zM150 280h1v8h-1zM151 274h1v8h-1zM152 267h1v9h-1zM153 262h1v7h-1zM154 256h1v8h-1zM155 250h1v8h-1zM156 245h1v7h-1zM157 240h1v7h-1zM158 235h1v7h-1zM159 231h1v6h-1zM160 226h1v7h-1zM161 223h1v5h-1zM162 219h1v6h-1zM163 216h1v5h-1zM164 213h1v5h-1zM165 211h1v4h-1zM166 209h1v4h-1zM167 207h1v4h-1zM168 206h1v3h-1zM169 205h1v3h-1zM170 205h1v2h-1zM171 205h1v2h-1zM172 205h1v2h-1zM173 205h1v3h-1zM174 206h1v3h-1zM175 207h1v4h-1zM176 209h1v4h-1zM177 211h1v4h-1zM178 213h1v5h-1zM179 216h1v5h-1zM180 219h1v6h-1zM181 223h1v5h-1zM182 226h1v7h-1zM183 231h1v6h-1zM184 235h1v7h-1zM185 240h1v7h-1zM186 245h1v7h-1zM187 250h1v8h-1zM188 256h1v8h-1zM189 262h1v7h-1zM190 267h1v9h-1zM191 274h1v8h-1zM192 280h1v8h-1zM193 286h1v9h-1zM194 293h1v8h-1zM195 299h1v9h-1zM196 306h1v8h-1zM197 312h1v9h-1zM198 319h1v8h-1zM199 325h1v9h-1zM200 332h1v8h-1zM201 338h1v9h-1zM202 345h1v8h-1zM203 351h1v8h-1zM204 357h1v8h-1zM205 363h1v7h-1zM206 368h1v8h-1zM207 374h1v7h-1zM208 379h1v7h-1zM209 384h1v6h-1zM210 388h1v6h-1zM211 392h1v6h-1zM212 396h1v6h-1zM213 400h1v5h-1zM214 403h1v5h-1zM215 406h1v4h-1zM216 408h1v4h-1zM217 410h1v4h-1zM218 412h1v3h-1zM219 413h1v2h-1zM220 413h1v2h-1zM221 413h1v2h-1zM222 413h1v2h-1zM223 413h1v2h-1zM224 412h1v3h-1zM225 410h1v4h-1zM226 408h1v4h-1zM227 406h1v4h-1zM228 403h1v5h-1zM229 400h1v5h-1zM230 396h1v6h-1zM231 392h1v6h-1zM232 388h1v6h-1zM233 384h1v6h-1zM234 379h1v7h-1zM235 374h1v7h-1zM236 368h1v8h-1zM237 363h1v7h-1zM238 357h1v8h-1zM239 351h1v8h-1zM240 345h1v8h-1zM241 338h1v9h-1zM242 332h1v8h-1zM243 325h1v9h-1zM244 319h1v8h-1zM245 312h1v9h-1zM246 306h1v8h-1zM247 299h1v9h-1zM248 293h1v8h-1zM249 286h1v9h-1zM250 280h1v8h-1zM251 274h1v8h-1zM252 267h1v9h-1zM253 262h1v7h-1zM254 256h1v8h-1zM255 250h1v8h-1zM256 245h1v7h-1zM257 240h1v7h-1zM258 235h1v7h-1zM259 231h1v6h-1zM260 226h1v7h-1zM261 223h1v5h-1zM262 219h1v6h-1zM263 216h1v5h-1zM264 213h1v5h-1zM265 211h1v4h-1zM266 209h1v4h-1zM267 207h1v4h-1zM268 206h1v3h-1zM269 205h1v3h-1zM270 205h1v2h-1zM271 205h1v2h-1zM272 205h1v2h-1zM273 205h1v3h-1zM274 206h1v3h-1zM275 207h1v4h-1zM276 209h1v4h-1zM277 211h1v4h-1zM278 213h1v5h-1zM279 216h1v5h-1zM280 219h1v6h-1zM281 223h1v5h-1zM282 226h1v7h-1zM283 231h1v6h-1zM284 235h1v7h-1zM285 240h1v7h-1zM286 245h1v7h-1zM287 250h1v8h-1zM288 256h1v8h-1zM289 262h1v7h-1zM290 267h1v9h-1zM291 274h1v8h-1zM292 280h1v8h-1zM293 286h1v9h-1zM294 293h1v8h-1zM295 299h1v9h-1zM296 306h1v8h-1zM297 312h1v9h-1zM298 319h1v8h-1zM299 325h1v9h-1zM300 332h1v8h-1zM301 338h1v9h-1zM302 345h1v8h-1zM303 351h1v8h-1zM304 357h1v8h-1zM305 363h1v7h-1zM306 368h1v8h-1zM307 374h1v7h-1zM308 379h1v7h-1zM309 384h1v6h-1zM310 388h1v6h-1zM311 392h1v6h-1zM312 396h1v6h-1zM313 400h1v5h-1zM314 403h1v5h-1zM315 406h1v4h-1zM316 408h1v4h-1zM317 410h1v4h-1zM318 412h1v3h-1zM319 413h1v2h-1zM320 413h1v2h-1zM321 413h1v2h-1zM322 413h1v2h-1zM323 413h1v2h-1zM324 412h1v3h-1zM325 410h1v4h-1zM326 408h1v4h-1zM327 406h1v4h-1zM328 403h1v5h-1zM329 400h1v5h-1zM330 396h1v6h-1zM331 392h1v6h-1zM332 388h1v6h-1zM333 384h1v6h-1zM334 379h1v7h-1zM335 374h1v7h-1zM336 368h1v8h-1zM337 363h1v7h-1zM338 357h1v8h-1zM339 351h1v8h-1zM340 345h1v8h-1zM341 338h1v9h-1zM342 332h1v8h-1zM343 325h1v9h-1zM344 319h1v8h-1zM345 312h1v9h-1zM346 306h1v8h-1zM347 299h1v9h-1zM348 293h1v8h-1zM349 286h1v9h-1zM350 280h1v8h-1zM351 274h1v8h-1zM352 267h1v9h-1zM353 262h1v7h-1zM354 256h1v8h-1zM355 250h1v8h-1zM356 245h1v7h-1zM357 240h1v7h-1zM358 235h1v7h-1zM359 231h1v6h-1zM360 226h1v7h-1zM361 223h1v5h-1zM362 219h1v6h-1zM363 216h1v5h-1zM364 213h1v5h-1zM365 211h1v4h-1zM366 209h1v4h-1zM367 207h1v4h-1zM368 206h1v3h-1zM369 205h1v3h-1zM370 205h1v2h-1zM371 205h1v2h-1zM372 205h1v2h-1zM373 205h1v3h-1zM374 206h1v3h-1zM375 207h1v4h-1zM376 209h1v4h-1zM377 211h1v4h-1zM378 213h1v5h-1zM379 216h1v5h-1zM380 219h1v6h-1zM381 223h1v5h-1zM382 226h1v7h-1zM383 231h1v6h-1zM384 235h1v7h-1zM385 240h1v7h-1zM386 245h1v7h-1zM387 250h1v8h-1zM388 256h1v8h-1zM389 262h1v7h-1zM390 267h1v9h-1zM391 274h1v8h-1zM392 280h1v8h-1zM393 286h1v9h-1zM394 293h1v8h-1zM395 299h1v9h-1zM396 306h1v8h-1zM397 312h1v9h-1zM398 319h1v8h-1zM399 325h1v9h-1zM400 332h1v8h-1zM401 338h1v9h-1zM402 345h1v8h-1zM403 351h1v8h-1zM404 357h1v8h-1zM405 363h1v7h-1zM406 368h1v8h-1zM407 374h1v7h-1zM408 379h1v7h-1zM409 384h1v6h-1zM410 388h1v6h-1zM411 392h1v6h-1zM412 396h1v6h-1zM413 400h1v5h-1zM414 403h1v5h-1zM415 406h1v4h-1zM416 408h1v4h-1zM417 410h1v4h-1zM418 412h1v3h-1zM419 413h1v2h-1zM420 413h1v2h-1zM421 413h1v2h-1zM422 413h1v2h-1zM423 413h1v2h-1zM424 412h1v3h-1zM425 410h1v4h-1zM426 408h1v4h-1zM427 406h1v4h-1zM428 403h1v5h-1zM429 400h1v5h-1zM430 396h1v6h-1zM431 392h1v6h-1zM432 388h1v6h-1zM433 384h1v6h-1zM434 379h1v7h-1zM435 374h1v7h-1zM436 368h1v8h-1zM437 363h1v7h-1zM438 357h1v8h-1zM439 351h1v8h-1zM440 345h1v8h-1zM441 338h1v9h-1zM442 332h1v8h-1zM443 325h1v9h-1zM444 319h1v8h-1zM445 312h1v9h-1zM446 306h1v8h-1zM447 299h1v9h-1zM448 293h1v8h-1zM449 286h1v9h-1zM450 280h1v8h-1zM451 274h1v8h-1zM452 267h1v9h-1zM453 262h1v7h-1zM454 256h1v8h-1zM455 250h1v8h-1zM456 245h1v7h-1zM457 240h1v7h-1zM458 235h1v7h-1zM459 231h1v6h-1zM460 226h1v7h-1zM461 223h1v5h-1zM462 219h1v6h-1zM463 216h1v5h-1zM464 213h1v5h-1zM465 211h1v4h-1zM466 209h1v4h-1zM467 207h1v4h-1zM468 206h1v3h-1zM469 205h1v3h-1zM470 205h1v2h-1zM471 205h1v2h-1zM472 205h1v2h-1zM473 205h1v3h-1zM474 206h1v3h-1zM475 207h1v4h-1zM476 209h1v4h-1zM477 211h1v4h-1zM478 213h1v5h-1zM479 216h1v5h-1zM480 219h1v6h-1zM481 223h1v5h-1zM482 226h1v7h-1zM483 231h1v6h-1zM484 235h1v7h-1zM485 240h1v7h-1zM486 245h1v7h-1zM487 250h1v8h-1zM488 256h1v8h-1zM489 262h1v7h-1zM490 267h1v9h-1zM491 274h1v8h-1zM492 280h1v8h-1zM493 286h1v9h-1zM494 293h1v8h-1zM495 299h1v9h-1zM496 306h1v8h-1zM497 312h1v9h-1zM498 319h1v8h-1zM499 325h1v9h-1zM500 332h1v8h-1zM501 338h1v9h-1zM502 345h1v8h-1zM503 351h1v8h-1zM504 357h1v8h-1zM505 363h1v7h-1zM506 368h1v8h-1zM507 374h1v7h-1zM508 379h1v7h-1zM509 384h1v6h-1zM510 388h1v6h-1zM511 392h1v6h-1zM512 396h1v6h-1zM513 400h1v5h-1zM514 403h1v5h-1zM515 406h1v4h-1zM516 408h1v4h-1zM517 410h1v4h-1zM518 412h1v3h-1zM519 413h1v2h-1zM520 413h1v2h-1zM521 413h1v2h-1zM522 413h1v2h-1zM523 413h1v2h-1zM524 412h1v3h-1zM525 410h1v4h-1zM526 408h1v4h-1zM527 406h1v4h-1zM528 403h1v5h-1zM529 400h1v5h-1zM530 396h1v6h-1zM531 392h1v6h-1zM532 388h1v6h-1zM533 384h1v6h-1zM534 379h1v7h-1zM535 374h1v7h-1zM536 368h1v8h-1zM537 363h1v7h-1zM538 357h1v8h-1zM539 351h1v8h-1zM540 345h1v8h-1zM541 338h1v9h-1zM542 332h1v8h-1zM543 325h1v9h-1zM544 319h1v8h-1zM545 312h1v9h-1zM546 306h1v8h-1zM547 299h1v9h-1zM548 293h1v8h-1zM549 286h1v9h-1zM550 280h1v8h-1zM551 274h1v8h-1zM552 267h1v9h-1zM553 262h1v7h-1zM554 256h1v8h-1zM555 250h1v8h-1zM556 245h1v7h-1zM557 240h1v7h-1zM558 235h1v7h-1zM559 231h1v6h-1zM560 226h1v7h-1zM561 223h1v5h-1zM562 219h1v6h-1zM563 216h1v5h-1zM564 213h1v5h-1zM565 211h1v4h-1zM566 209h1v4h-1zM567 207h1v4h-1zM568 206h1v3h-1zM569 205h1v3h-1zM570 205h1v2h-1zM571 205h1v2h-1zM572 205h1v2h-1zM573 205h1v3h-1zM574 206h1v3h-1zM575 207h1v4h-1zM576 209h1v4h-1zM577 211h1v4h-1zM578 213h1v5h-1zM579 216h1v5h-1zM580 219h1v6h-1zM581 223h1v5h-1zM582 226h1v7h-1zM583 231h1v6h-1zM584 235h1v7h-1zM585 240h1v7h-1zM586 245h1v7h-1zM587 250h1v8h-1zM588 256h1v8h-1zM589 262h1v7h-1zM590 267h1v9h-1zM591 274h1v8h-1zM592 280h1v8h-1zM593 286h1v9h-1zM594 293h1v8h-1zM595 299h1v9h-1zM596 306h1v8h-1zM597 312h1v9h-1zM598 319h1v8h-1zM599 325h1v9h-1zM600 332h1v8h-1zM601 338h1v9h-1zM602 345h1v8h-1zM603 351h1v8h-1zM604 357h1v8h-1zM605 363h1v7h-1zM606 368h1v8h-1zM607 374h1v7h-1zM608 379h1v7h-1zM609 384h1v6h-1zM610 388h1v6h-1zM611 392h1v6h-1zM612 396h1v6h-1zM613 400h1v5h-1zM614 403h1v5h-1zM615 406h1v4h-1zM616 408h1v4h-1zM617 410h1v4h-1zM618 412h1v3h-1zM619 413h1v2h-1zM620 413h1v2h-1zM621 413h1v2h-1zM622 413h1v2h-1zM623 413h1v2h-1zM624 412h1v3h-1zM625 410h1v4h-1zM626 408h1v4h-1zM627 406h1v4h-1zM628 403h1v5h-1zM629 400h1v5h-1zM630 396h1v6h-1zM631 392h1v6h-1zM632 388h1v6h-1zM633 384h1v6h-1zM634 379h1v7h-1zM635 374h1v7h-1zM636 368h1v8h-1zM637 363h1v7h-1zM638 357h1v8h-1zM639 351h1v8h-1zM640 345h1v8h-1zM641 338h1v9h-1zM642 332h1v8h-1zM643 325h1v9h-1zM644 319h1v8h-1zM645 312h1v9h-1zM646 306h1v8h-1zM647 299h1v9h-1zM648 293h1v8h-1zM649 286h1v9h-1zM650 280h1v8h-1zM651 274h1v8h-1zM652 267h1v9h-1zM653 262h1v7h-1zM654 256h1v8h-1zM655 250h1v8h-1zM656 245h1v7h-1zM657 240h1v7h-1zM658 235h1v7h-1zM659 231h1v6h-1zM660 226h1v7h-1zM661 223h1v5h-1zM662 219h1v6h-1zM663 216h1v5h-1zM664 213h1v5h-1zM665 211h1v4h-1zM666 209h1v4h-1zM667 207h1v4h-1zM668 206h1v3h-1zM669 205h1v3h-1zM670 205h1v2h-1zM671 205h1v2h-1zM672 205h1v2h-1zM673 205h1v3h-1zM674 206h1v3h-1zM675 207h1v4h-1zM676 209h1v4h-1zM677 211h1v4h-1zM678 213h1v5h-1zM679 216h1v5h-1zM680 219h1v6h-1zM681 223h1v5h-1zM682 226h1v7h-1zM683 231h1v6h-1zM684 235h1v7h-1zM685 240h1v7h-1zM686 245h1v7h-1zM687 250h1v8h-1zM688 256h1v8h-1zM689 262h1v7h-1zM690 267h1v9h-1zM691 274h1v12h-1zM692 280h1v8h-1z"/><path fill="#5e5e5e" d="M30 165h663v1h-663zM30 165h1v280h-1zM692 161h1v284h-1z"/></svg>
<div style="position:absolute;left:0px;top:0px;width:800px;height:29px;background:#444"></div>
<div style="position:absolute;left:1px;top:1px;width:58px;height:26px;background:#333"></div>
<div style="position:absolute;left:4px;top:3px;width:54px;height:23px;background:#d9a900;border-top:1px solid #f4dc00;border-left:2px solid #f0d800;border-bottom:2px solid #000;border-right:2px solid #1a1a1a;box-sizing:border-box;"></div>
<div style="position:absolute;left:12.50px;top:7.06px;font-family:'Liberation Sans',sans-serif;font-size:14px;font-weight:normal;line-height:15.638px;color:#000;white-space:nowrap;letter-spacing:0px;transform:scaleX(0.99);transform-origin:0 0;">AUTO</div>
<div style="position:absolute;left:61px;top:1px;width:27px;height:27px;background:#000"></div>
<div style="position:absolute;left:62px;top:2px;width:25px;height:25px;background:#333;border-top:2px solid #5c5c5c;border-left:2px solid #585858;border-bottom:2px solid #1c1c1c;border-right:1px solid #1c1c1c;box-sizing:border-box"></div>
<div style="position:absolute;left:68.80px;top:4.34px;font-family:'Liberation Sans',sans-serif;font-size:15.5px;font-weight:bold;line-height:17.314px;color:#fff;white-space:nowrap;letter-spacing:0px;transform:scaleX(1.1);transform-origin:0 0;">Z</div>
<div style="position:absolute;left:89px;top:2px;width:112px;height:25px;background:#111"></div>
<div style="position:absolute;left:116.00px;top:7.17px;font-family:'Liberation Sans',sans-serif;font-size:13.5px;font-weight:normal;line-height:15.079px;color:#e4e0c0;white-space:nowrap;letter-spacing:0px;">100.00&mu;s</div>
<div style="position:absolute;left:202px;top:1px;width:78px;height:27px;background:#000"></div>
<div style="position:absolute;left:203px;top:2px;width:76px;height:12px;background:#333"></div>
<div style="position:absolute;left:203px;top:15px;width:76px;height:12px;background:#333"></div>
<div style="position:absolute;left:219.50px;top:1.08px;font-family:'Liberation Sans',sans-serif;font-size:11.5px;font-weight:normal;line-height:12.845px;color:#e4e0c0;white-space:nowrap;letter-spacing:0.8px;">56M pts</div>
<div style="position:absolute;left:209.50px;top:17.09px;font-family:'Liberation Sans',sans-serif;font-size:11.5px;font-weight:normal;line-height:12.845px;color:#e4e0c0;white-space:nowrap;letter-spacing:0.55px;">250.0MSa/s</div>
<div style="position:absolute;left:281px;top:2px;width:198px;height:25px;background:#000"></div>
<div style="position:absolute;left:284px;top:20px;width:192px;height:2px;background:#00e000"></div>
<svg width="800" height="30" viewBox="0 0 800 30" style="position:absolute;left:0;top:0" shape-rendering="crispEdges"><path d="M377 0h7.5l-3.75 4z" fill="#fff" shape-rendering="geometricPrecision"/><path fill="#00e000" d="M377 5h7v1h-7zM376 6h1v6h-1zM384 6h1v6h-1zM377 12h1v1h-1zM378 13h1v1h-1zM379 14h1v1h-1zM383 12h1v1h-1zM382 13h1v1h-1zM381 14h1v1h-1zM380 15h1v1h-1zM378 7h5v1h-5zM380 8h1v5h-1zM378 16h3v1h-3zM377 17h1v8h-1zM381 17h1v8h-1zM378 25h3v1h-3z"/></svg>
<div style="position:absolute;left:480px;top:1px;width:27px;height:27px;background:#000"></div>
<div style="position:absolute;left:481px;top:2px;width:25px;height:25px;background:#333;border-top:2px solid #5c5c5c;border-left:2px solid #585858;border-bottom:2px solid #1c1c1c;border-right:1px solid #1c1c1c;box-sizing:border-box"></div>
<div style="position:absolute;left:488.30px;top:7.06px;font-family:'Liberation Sans',sans-serif;font-size:14px;font-weight:bold;line-height:15.638px;color:#e4e0c0;white-space:nowrap;letter-spacing:0px;transform:scaleX(1.08);transform-origin:0 0;">D</div>
<div style="position:absolute;left:508px;top:2px;width:70px;height:25px;background:#111"></div>
<div style="position:absolute;left:527.00px;top:7.96px;font-family:'Liberation Sans',sans-serif;font-size:14.5px;font-weight:normal;line-height:16.197px;color:#e4e0c0;white-space:nowrap;letter-spacing:0px;">0.00s</div>
<div style="position:absolute;left:578px;top:1px;width:27px;height:27px;background:#000"></div>
<div style="position:absolute;left:579px;top:2px;width:25px;height:25px;background:#333;border-top:2px solid #5c5c5c;border-left:2px solid #585858;border-bottom:2px solid #1c1c1c;border-right:1px solid #1c1c1c;box-sizing:border-box"></div>
<div style="position:absolute;left:588.00px;top:7.06px;font-family:'Liberation Sans',sans-serif;font-size:14px;font-weight:bold;line-height:15.638px;color:#e4e0c0;white-space:nowrap;letter-spacing:0px;">T</div>
<div style="position:absolute;left:606px;top:2px;width:192px;height:25px;background:#111"></div>
<div style="position:absolute;left:610px;top:9px;width:13px;height:12px;background:#00ffff;border-radius:2px"></div>
<svg width="30" height="30" viewBox="0 0 30 30" style="position:absolute;left:600px;top:0"><path d="M16 11h2v8h-2z" fill="#000"/><path d="M14 14.8L17.2 11.6" stroke="#000" stroke-width="2"/></svg>
<div style="position:absolute;left:638.20px;top:7.10px;font-family:'Liberation Sans',sans-serif;font-size:13.8px;font-weight:normal;line-height:15.415px;color:#e4e0c0;white-space:nowrap;letter-spacing:0px;transform:scaleX(0.99);transform-origin:0 0;">I2C DC Auto 0.00&mu;V</div>
<div style="position:absolute;left:346.00px;top:133.64px;font-family:'Liberation Sans',sans-serif;font-size:16px;font-weight:normal;line-height:17.872px;color:#e4e0c0;white-space:nowrap;letter-spacing:0px;transform:scaleX(0.92);transform-origin:0 0;">M: 10.00ms</div>
<svg width="800" height="160" viewBox="0 0 800 160" style="position:absolute;left:0;top:0"><path d="M375.3 35.3h10.4v9.4l-5.2 3.9l-5.2-3.9z" fill="#00ffff"/><path d="M378 38h5v1h-5zM380 39h1v4h-1z" fill="#000" shape-rendering="crispEdges"/><path d="M376 40h8v1h-8zM376 41h1v106h-1zM383 41h1v106h-1zM376 146h8v1h-8z" fill="#6a6a6a" shape-rendering="crispEdges"/></svg>
<div style="position:absolute;left:500px;top:45px;width:150px;height:30px;background:#000;border:1px solid #9a9a9a;box-sizing:border-box"></div>
<svg width="800" height="80" viewBox="0 0 800 80" style="position:absolute;left:0;top:0" shape-rendering="crispEdges"><path d="M501 46.5H649M501.5 46V74M501 73.5H649M648.5 46V74" stroke="#3c3c3c" stroke-width="1" stroke-dasharray="1 2" fill="none"/><path d="M552.5 46V74" stroke="#707070" stroke-width="1" stroke-dasharray="2 1" fill="none"/></svg>
<div style="position:absolute;left:507.50px;top:51.64px;font-family:'Liberation Sans',sans-serif;font-size:16px;font-weight:normal;line-height:17.872px;color:#00d0e0;white-space:nowrap;letter-spacing:0px;transform:scaleX(1.06);transform-origin:0 0;">Freq</div>
<div style="position:absolute;left:558.80px;top:51.64px;font-family:'Liberation Sans',sans-serif;font-size:16px;font-weight:normal;line-height:17.872px;color:#e4e0c0;white-space:nowrap;letter-spacing:0px;transform:scaleX(1.02);transform-origin:0 0;">4.999996kHz</div>
<svg width="800" height="170" viewBox="0 0 800 170" style="position:absolute;left:0;top:0">
<path d="M667 34H693V162L667 145Z" fill="#9a9a9a"/>
<path d="M669 36H691V159.3L669 144.8Z" fill="#161616"/>
<path d="M670 37H690V158L670 144.6Z" fill="#333"/>
<path d="M670 37.5H689.5M670.5 37.5V144" stroke="#575757" stroke-width="1" fill="none"/>
</svg>
<div style="position:absolute;left:641px;top:82.5px;width:80px;height:20px;font-family:'Liberation Mono',monospace;font-size:16px;color:#e4e0c0;line-height:20px;text-align:center;transform:rotate(-90deg) scaleX(0.97)">Acquire</div>
<div style="position:absolute;left:693px;top:33px;width:107px;height:161px;background:#111"></div>
<div style="position:absolute;left:693px;top:33px;width:106px;height:41px;background:#555;border-top:2px solid #999;border-left:2px solid #8a8a8a;box-sizing:border-box"></div>
<div style="position:absolute;left:695px;top:35px;width:102px;height:38px;background:#181818"></div>
<div style="position:absolute;left:695px;top:35px;width:100px;height:36px;background:#333;border-top:3px solid #777;border-left:2px solid #707070;box-sizing:border-box"></div>
<div style="position:absolute;left:725.00px;top:45.87px;font-family:'Liberation Mono',monospace;font-size:18px;font-weight:normal;line-height:20.394px;color:#e4e0c0;white-space:nowrap;letter-spacing:0px;transform:scaleX(0.9);transform-origin:0 0;">Mode</div>
<div style="position:absolute;left:718.00px;top:86.87px;font-family:'Liberation Mono',monospace;font-size:18px;font-weight:normal;line-height:20.394px;color:#e4e0c0;white-space:nowrap;letter-spacing:0px;transform:scaleX(0.85);transform-origin:0 0;">Sample</div>
<div style="position:absolute;left:693px;top:113px;width:106px;height:41px;background:#555;border-top:2px solid #999;border-left:2px solid #8a8a8a;box-sizing:border-box"></div>
<div style="position:absolute;left:695px;top:115px;width:102px;height:38px;background:#181818"></div>
<div style="position:absolute;left:695px;top:115px;width:100px;height:36px;background:#333;border-top:3px solid #777;border-left:2px solid #707070;box-sizing:border-box"></div>
<div style="position:absolute;left:707.00px;top:125.87px;font-family:'Liberation Mono',monospace;font-size:18px;font-weight:normal;line-height:20.394px;color:#e4e0c0;white-space:nowrap;letter-spacing:0px;transform:scaleX(0.82);transform-origin:0 0;">Mem Depth</div>
<div style="position:absolute;left:730.00px;top:166.87px;font-family:'Liberation Mono',monospace;font-size:18px;font-weight:normal;line-height:20.394px;color:#e4e0c0;white-space:nowrap;letter-spacing:0px;transform:scaleX(0.85);transform-origin:0 0;">56M</div>
<div style="position:absolute;left:693px;top:192px;width:107px;height:2px;background:#555"></div>
<div style="position:absolute;left:798px;top:433px;width:1px;height:12px;background:#555"></div>
<svg width="12" height="7" viewBox="0 0 12 7" style="position:absolute;left:694px;top:104.5px"><path d="M0.5 0.3h10.5l-5.25 5.4z" fill="#d0d0d0"/></svg>
<svg width="12" height="7" viewBox="0 0 12 7" style="position:absolute;left:694px;top:185px"><path d="M0.5 0.3h10.5l-5.25 5.4z" fill="#d0d0d0"/></svg>
<svg width="20" height="14" viewBox="0 0 20 14" style="position:absolute;left:9px;top:300px">
<path d="M1 1h12l5 6l-5 6h-12z" fill="#00ffff"/>
</svg>
<svg width="30" height="30" viewBox="0 0 30 30" style="position:absolute;left:0;top:290px"><path d="M17 13h2v8h-2z" fill="#000"/><path d="M15 16.8L18.2 13.6" stroke="#000" stroke-width="2"/></svg>
<div style="position:absolute;left:0px;top:445px;width:800px;height:35px;background:#444"></div>
<div style="position:absolute;left:2px;top:448px;width:173px;height:30px;background:#00ffff"></div>
<div style="position:absolute;left:3px;top:449px;width:22px;height:28px;background:#00c4c4;border-right:1px solid #066;border-bottom:1px solid #066;box-sizing:border-box"></div>
<svg width="30" height="30" viewBox="0 0 30 30" style="position:absolute;left:0;top:450px"><path d="M10.3 11.2L14.5 7.3V19.8" fill="none" stroke="#000" stroke-width="1.7"/></svg>
<div style="position:absolute;left:27px;top:449px;width:147px;height:28px;background:#0a8a8a"></div>
<div style="position:absolute;left:29px;top:451px;width:143px;height:24px;background:#111"></div>
<svg width="12" height="8" viewBox="0 0 12 8" style="position:absolute;left:31px;top:461px"><path d="M0 0h11v2h-11z" fill="#e4e0c0"/><path d="M0 4h2v2h-2zM3 4h2v2h-2zM6 4h2v2h-2zM9 4h2v2h-2z" fill="#e4e0c0"/></svg>
<div style="position:absolute;left:43.30px;top:455.06px;font-family:'Liberation Sans',sans-serif;font-size:14px;font-weight:normal;line-height:15.638px;color:#e4e0c0;white-space:nowrap;letter-spacing:0px;transform:scaleX(0.86);transform-origin:0 0;">500.00mV 1X</div>
<div style="position:absolute;left:177px;top:448px;width:23px;height:30px;background:#333;border-top:1px solid #777;border-left:2px solid #777;border-right:1px solid #222;border-bottom:1px solid #222;box-sizing:border-box"></div>
<div style="position:absolute;left:183.50px;top:453.01px;font-family:'Liberation Sans',sans-serif;font-size:19px;font-weight:normal;line-height:21.223px;color:#f0c000;white-space:nowrap;letter-spacing:0px;">2</div>
<div style="position:absolute;left:202px;top:448px;width:148px;height:30px;background:#111"></div>
<div style="position:absolute;left:256.00px;top:456.06px;font-family:'Liberation Sans',sans-serif;font-size:14px;font-weight:normal;line-height:15.638px;color:#e4e0c0;white-space:nowrap;letter-spacing:0px;transform:scaleX(0.85);transform-origin:0 0;">OFF</div>
<div style="position:absolute;left:352px;top:448px;width:23px;height:30px;background:#333;border-top:1px solid #777;border-left:2px solid #777;border-right:1px solid #222;border-bottom:1px solid #222;box-sizing:border-box"></div>
<div style="position:absolute;left:357.00px;top:454.64px;font-family:'Liberation Sans',sans-serif;font-size:16px;font-weight:bold;line-height:17.872px;color:#ff2020;white-space:nowrap;letter-spacing:0px;">M</div>
<div style="position:absolute;left:377px;top:448px;width:298px;height:30px;background:#111"></div>
<div style="position:absolute;left:509.00px;top:456.06px;font-family:'Liberation Sans',sans-serif;font-size:14px;font-weight:normal;line-height:15.638px;color:#e4e0c0;white-space:nowrap;letter-spacing:0px;transform:scaleX(0.85);transform-origin:0 0;">OFF</div>
<div style="position:absolute;left:676px;top:449px;width:21px;height:29px;background:#000"></div>
<svg width="21" height="29" viewBox="0 0 21 29" style="position:absolute;left:676px;top:449px">
<path d="M11.2 7.5V22" stroke="#f4f4f4" stroke-width="1.9"/>
<path d="M11.2 4.8l-2.4 3.2h4.8z" fill="#f4f4f4"/>
<circle cx="10.9" cy="22.8" r="2.4" fill="#f4f4f4"/>
<circle cx="6.9" cy="13.3" r="1.9" fill="#f4f4f4"/>
<path d="M6.9 14.5Q7.2 18.2 10.6 19.8" stroke="#f4f4f4" stroke-width="1.3" fill="none"/>
<circle cx="15" cy="10.7" r="2.1" fill="#f4f4f4"/>
<path d="M15 12.2Q14.6 14.8 11.6 15.8" stroke="#f4f4f4" stroke-width="1.3" fill="none"/>
</svg>
<div style="position:absolute;left:699px;top:449px;width:21px;height:29px;background:#111"></div>
<svg width="21" height="29" viewBox="0 0 21 29" style="position:absolute;left:699px;top:449px" fill="none" stroke="#4a4a4a" stroke-width="1">
<rect x="7.5" y="3.5" width="6" height="5"/><path d="M10.5 8.5v5M1.5 13.5h18M4.5 13.5v5M16.5 13.5v5"/>
<rect x="1.5" y="18.5" width="6" height="5"/><rect x="13.5" y="18.5" width="6" height="5"/>
</svg>
<div style="position:absolute;left:723px;top:448px;width:75px;height:14px;background:#111"></div>
<div style="position:absolute;left:723px;top:464px;width:75px;height:14px;background:#111"></div>
<div style="position:absolute;left:742.00px;top:448.17px;font-family:'Liberation Sans',sans-serif;font-size:13.5px;font-weight:normal;line-height:15.079px;color:#8a8a8a;white-space:nowrap;letter-spacing:0px;transform:scaleX(0.9);transform-origin:0 0;">11 : 30</div>
<div style="position:absolute;left:726.00px;top:463.67px;font-family:'Liberation Sans',sans-serif;font-size:13.5px;font-weight:normal;line-height:15.079px;color:#8a8a8a;white-space:nowrap;letter-spacing:0px;">2022.06.14</div>
</body></html>
